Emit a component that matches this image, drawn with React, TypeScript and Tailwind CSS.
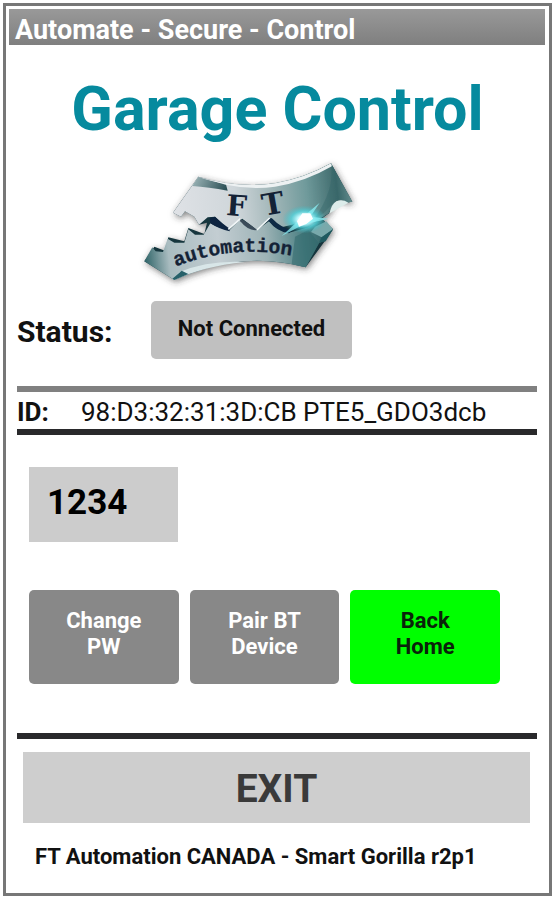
import React from "react";

function Logo() {
  return (
    <svg viewBox="0 0 690 420" className="mx-auto block h-[140px] w-[230px]" role="img" aria-label="FT automation">
      <defs>
        <linearGradient id="upper" x1="115" y1="180" x2="650" y2="120" gradientUnits="userSpaceOnUse">
          <stop offset="0" stopColor="#dfe2e6" />
          <stop offset="0.35" stopColor="#cfd6da" />
          <stop offset="0.55" stopColor="#a3b7b9" />
          <stop offset="0.75" stopColor="#6f9a9b" />
          <stop offset="0.92" stopColor="#3f6a6c" />
          <stop offset="1" stopColor="#7fa3a4" />
        </linearGradient>
        <linearGradient id="lower" x1="30" y1="340" x2="590" y2="280" gradientUnits="userSpaceOnUse">
          <stop offset="0" stopColor="#2f6468" />
          <stop offset="0.13" stopColor="#a9bcc0" />
          <stop offset="0.4" stopColor="#c3cdd2" />
          <stop offset="0.65" stopColor="#9db3b6" />
          <stop offset="0.85" stopColor="#4f8285" />
          <stop offset="1" stopColor="#2c5c60" />
        </linearGradient>
        <linearGradient id="corner" x1="190" y1="80" x2="280" y2="120" gradientUnits="userSpaceOnUse">
          <stop offset="0" stopColor="#8fa9ac" />
          <stop offset="1" stopColor="#24494f" />
        </linearGradient>
        <radialGradient id="glow">
          <stop offset="0" stopColor="#ffffff" />
          <stop offset="0.3" stopColor="#c9fbff" />
          <stop offset="0.6" stopColor="#4fd5de" stopOpacity="0.75" />
          <stop offset="1" stopColor="#3fb9c2" stopOpacity="0" />
        </radialGradient>
        <filter id="shadow" x="-10%" y="-10%" width="125%" height="130%">
          <feDropShadow dx="4" dy="6" stdDeviation="9" floodColor="#333333" floodOpacity="0.6" />
        </filter>
        <path id="arc" d="M122 350 Q290 282 476 318" />
      </defs>
      <g filter="url(#shadow)">
        <path
          d="M190 80 Q310 116 420 100 Q510 84 588 40 L652 155 L632 158 Q622 146 604 154 Q590 168 582 190 L560 206 L594 238 L572 270 L512 352 Q400 322 290 338 Q200 352 118 390 L28 334 L58 290 L90 302 L100 262 L148 274 L160 234 L208 252 L216 218 L192 224 L178 200 L150 184 L138 200 L114 188 Z"
          fill="#12353d"
        />
        <path
          d="M190 80 Q310 116 420 100 Q510 84 588 40 L652 155 L632 158 Q622 146 604 154 Q590 168 582 190 L540 215 L480 222 L440 232 L405 204 L366 240 L322 206 L280 238 L240 200 L218 202 L192 224 L178 200 L150 184 L138 200 L114 188 Z"
          fill="url(#upper)"
        />
        <path
          d="M28 334 L52 292 L62 304 L84 306 L98 266 L118 278 L148 278 L160 238 L180 254 L206 254 L226 220 Q252 236 284 240 L316 208 Q336 238 366 240 L402 214 Q430 246 462 248 L520 232 L560 206 L594 238 L572 270 L552 280 L512 352 Q400 322 290 338 Q200 352 118 390 Z"
          fill="url(#lower)"
        />
      </g>
      <path d="M190 80 Q230 96 272 100 L278 122 Q220 112 172 108 Z" fill="url(#corner)" />
      <path d="M190 80 Q310 116 420 100 Q510 84 588 40 L592 48 Q510 96 420 110 Q350 120 272 104 Z" fill="#edf1f2" />
      <path d="M588 40 L652 155 L634 158 Q618 140 598 156 L566 190 L538 206 Q600 120 588 40 Z" fill="#2e6264" opacity="0.35" />
      <path d="M604 154 Q622 146 640 158 L584 190 Q588 164 604 154 Z" fill="#dcecea" />
      <path d="M224 204 L240 200 L262 220 L284 236 L284 244 Q254 238 226 220 Z" fill="#0c2340" />
      <path d="M314 206 Q336 214 366 240 Q340 244 316 214 Z" fill="#3b4b59" />
      <path d="M390 214 L410 204 Q438 234 472 240 L462 250 Q424 244 402 214 Z" fill="#0d2a45" />
      <path d="M280 238 L316 206 M366 240 L404 204" fill="none" stroke="#f1f6f7" strokeWidth="5" />
      <path d="M112 386 L134 366 Q220 330 330 336 Q200 350 118 390 Z" fill="#d8e6e8" />
      <path d="M112 386 L140 362 L160 372 L118 390 Z" fill="#276069" />
      <path d="M540 230 L574 214 L594 238 L560 262 L528 246 Z" fill="#79a9ab" />
      <path d="M560 262 L594 238 L572 274 L552 278 Z" fill="#1f5a60" />
      <path d="M512 352 L552 280 L520 240 L480 260 L470 342 Z" fill="#2f686b" opacity="0.55" />
      <ellipse cx="508" cy="208" rx="66" ry="42" fill="url(#glow)" />
      <path d="M440 258 L490 212 L554 158 L526 200 L580 206 L528 218 L490 232 Z" fill="#8cf0f5" opacity="0.75" />
      <path d="M486 214 L502 190 L526 190 L534 206 L514 222 L492 230 Z" fill="#ffffff" />
      <g fill="#142236" fontWeight="700">
        <text x="272" y="195" fontSize="86" fontFamily="'DejaVu Serif', serif" transform="rotate(4 272 195)">F</text>
        <text x="386" y="198" fontSize="90" fontFamily="'DejaVu Serif', serif" transform="rotate(-10 386 198)">T</text>
        <text fontSize="59" fontFamily="'Liberation Mono', monospace" stroke="#142236" strokeWidth="1">
          <textPath href="#arc">automation</textPath>
        </text>
      </g>
    </svg>
  );
}

const action = "h-[94px] rounded-[5px] pb-1.5 text-[22px] leading-[26px] font-bold";

export default function App() {
  return (
    <div className="min-h-screen bg-white pt-[3px] pr-0.5 pb-1 pl-[3px] font-[Roboto,sans-serif] text-[#111111]">
      <main className="border-[3px] border-[#777777] pb-6">
        <header className="mt-[3px] mr-1 ml-[3px] h-9 bg-linear-to-b from-[#999999] to-[#7f7f7f] pl-1.5">
          <p className="pt-[5px] text-[27px] leading-8 font-bold text-white">Automate - Secure - Control</p>
        </header>

        <h1 className="mt-7 text-center text-[61px] leading-[72px] font-bold text-[#068a9e]">Garage Control</h1>
        <div className="mt-[5px] pr-[56px]">
          <Logo />
        </div>

        <div className="mr-3 ml-[11px]">
          <div className="mt-[11px] flex items-center">
            <span className="w-[134px] pt-1 text-[30px] leading-8 font-bold">Status:</span>
            <button type="button" className="h-[58px] w-[201px] rounded-[5px] bg-[#c0c0c0] pb-1 text-[22px] font-bold">
              Not Connected
            </button>
          </div>

          <div className="mt-[27px] flex h-[49px] items-center border-t-[6px] border-b-[6px] border-t-[#808080] border-b-[#29292b] pt-0.5 text-[26px] leading-8">
            <span className="w-16 font-bold">ID:</span>
            <span>98:D3:32:31:3D:CB PTE5_GDO3dcb</span>
          </div>

          <div className="mr-[37px] ml-3">
            <input
              type="text"
              aria-label="Password"
              defaultValue="1234"
              className="mt-8 block h-[75px] w-[149px] bg-[#cccccc] px-[18px] pb-1 text-[35px] font-bold text-black outline-none"
            />
            <div className="mt-12 grid grid-cols-3 gap-[11px]">
              <button type="button" className={action + " bg-[#888888] text-white"}>
                Change
                <br />
                PW
              </button>
              <button type="button" className={action + " bg-[#888888] text-white"}>
                Pair BT
                <br />
                Device
              </button>
              <button type="button" className={action + " bg-[#00ff00] text-[#0a220a]"}>
                Back
                <br />
                Home
              </button>
            </div>
          </div>

          <hr className="mt-[49px] border-t-[6px] border-[#29292b]" />
          <div className="mr-[7px] ml-1.5">
            <button type="button" className="mt-[13px] h-[71px] w-full bg-[#cecece] pt-1 text-[39px] font-bold text-[#3a3a3a]">
              EXIT
            </button>
            <footer className="mt-[22px] pl-3 text-[22px] leading-6 font-bold">
              FT Automation CANADA - Smart Gorilla r2p1
            </footer>
          </div>
        </div>
      </main>
    </div>
  );
}
